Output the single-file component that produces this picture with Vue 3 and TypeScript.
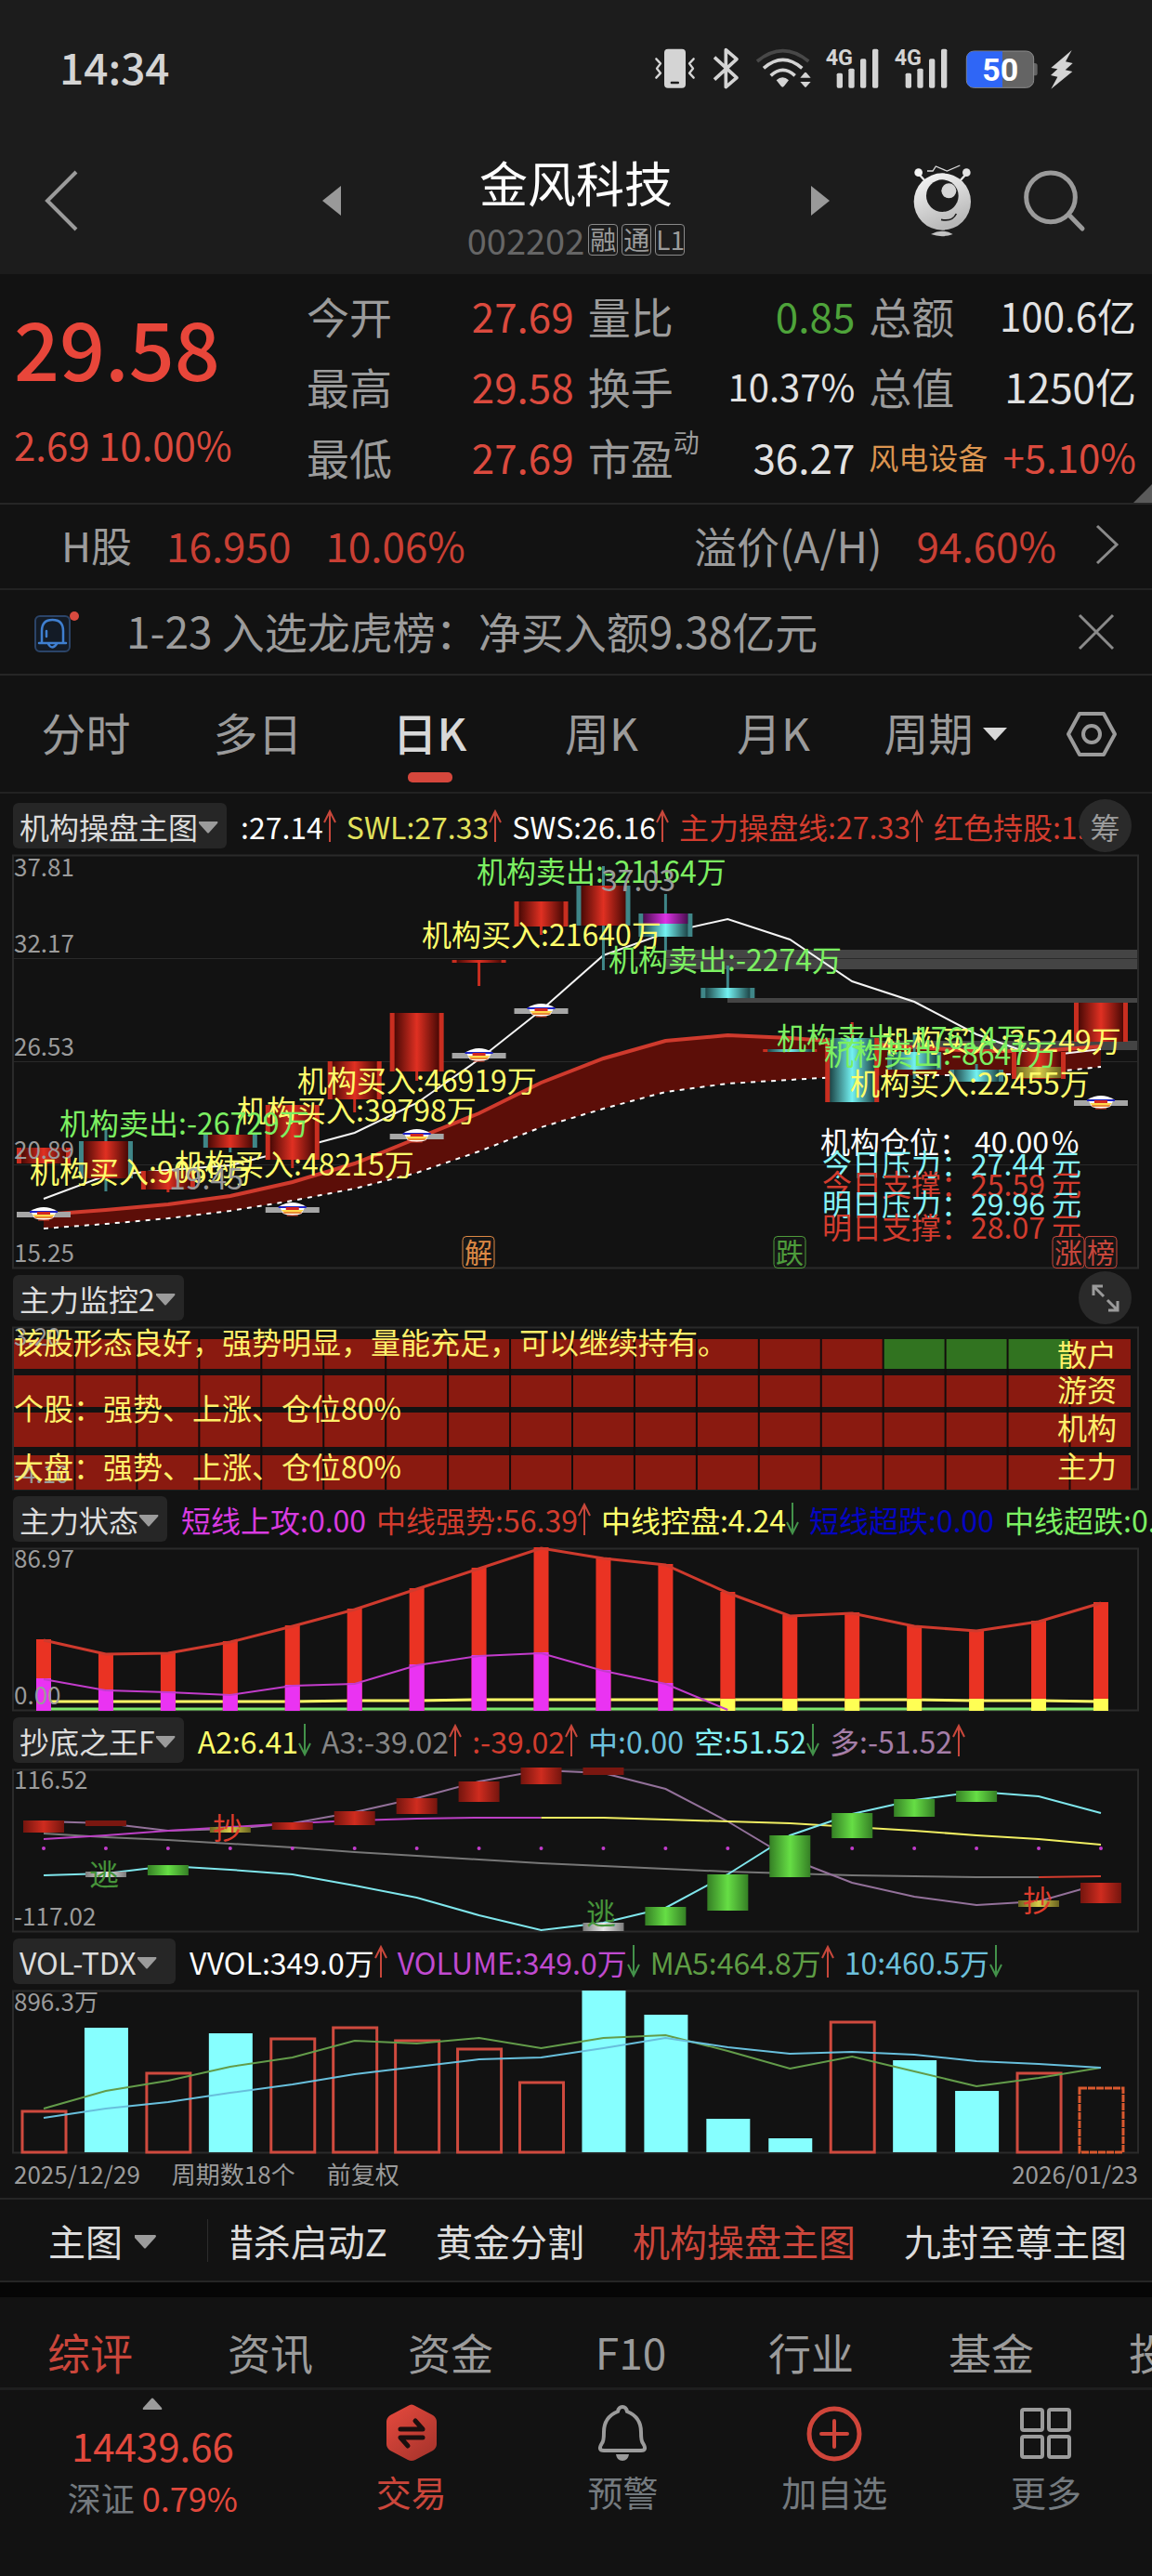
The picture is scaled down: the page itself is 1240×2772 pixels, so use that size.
<script setup lang="ts">
interface Stat {
  label: string
  sup?: string
  value: string
  tone: string
  size?: string
  small?: boolean
}
interface Reading {
  text: string
  color: string
  dir?: 'up' | 'down'
}
interface Candle {
  top: number
  bottom: number
  fill: string
  edge: string
  high?: number
  low?: number
}
interface Block {
  i: number
  top: number
  bottom: number
  fill: string
}
interface Note {
  x: number
  y: number
  text: string
  kind: string
}

const FIRST = 47
const STEP = 66.94
const cx = (i: number): number => FIRST + STEP * i
const path = (ys: number[], start = 0): string =>
  ys.map((y, k) => `${cx(k + start).toFixed(1)},${y}`).join(' ')

const stats: Stat[] = [
  { label: '今开', value: '27.69', tone: 'red' },
  { label: '量比', value: '0.85', tone: 'green' },
  { label: '总额', value: '100.6亿', tone: 'white', size: 'mid' },
  { label: '最高', value: '29.58', tone: 'red' },
  { label: '换手', value: '10.37%', tone: 'white', size: 'low' },
  { label: '总值', value: '1250亿', tone: 'white' },
  { label: '最低', value: '27.69', tone: 'red' },
  { label: '市盈', sup: '动', value: '36.27', tone: 'white' },
  { label: '风电设备', value: '+5.10%', tone: 'red', size: 'mid', small: true },
]

const periods = ['分时', '多日', '日K', '周K', '月K']
const infoTabs = ['综评', '资讯', '资金', 'F10', '行业', '基金', '投资']
const templates = ['猎杀启动Z', '黄金分割', '机构操盘主图', '九封至尊主图']

const RED = '#d23c2e'
const YELLOW = '#ffff6b'
const CYAN = '#85f3f7'
const MAGENTA = '#d83be0'

const mainReadings: Reading[] = [
  { text: ':27.14', color: '#ffffff', dir: 'up' },
  { text: 'SWL:27.33', color: '#e2e25c', dir: 'up' },
  { text: 'SWS:26.16', color: '#ffffff', dir: 'up' },
  { text: '主力操盘线:27.33', color: RED, dir: 'up' },
  { text: '红色持股:1.00', color: RED },
]
const stateReadings: Reading[] = [
  { text: '短线上攻:0.00', color: MAGENTA },
  { text: '中线强势:56.39', color: RED, dir: 'up' },
  { text: '中线控盘:4.24', color: YELLOW, dir: 'down' },
  { text: '短线超跌:0.00', color: '#0505c0' },
  { text: '中线超跌:0.00', color: '#7cf062' },
]
const bottomReadings: Reading[] = [
  { text: 'A2:6.41', color: YELLOW, dir: 'down' },
  { text: 'A3:-39.02', color: '#868686', dir: 'up' },
  { text: ':-39.02', color: RED, dir: 'up' },
  { text: '中:0.00', color: '#6cc0dc' },
  { text: '空:51.52', color: CYAN, dir: 'down' },
  { text: '多:-51.52', color: '#a57ea8', dir: 'up' },
]
const volumeReadings: Reading[] = [
  { text: 'VVOL:349.0万', color: '#ffffff', dir: 'up' },
  { text: 'VOLUME:349.0万', color: '#c04ad0', dir: 'down' },
  { text: 'MA5:464.8万', color: '#5f9e45', dir: 'up' },
  { text: '10:460.5万', color: '#6cc0dc', dir: 'down' },
]

const R = 'url(#g-red)'
const C = 'url(#g-cyan)'
const EDGE_RED = '#c92e20'
const EDGE_TEAL = '#3f8688'
const candles: Candle[] = [
  { top: 335, bottom: 352, fill: R, edge: EDGE_RED },
  { top: 328, bottom: 368, fill: R, edge: EDGE_TEAL, high: 315, low: 382 },
  { top: 360, bottom: 380, fill: R, edge: EDGE_RED, low: 383 },
  { top: 321, bottom: 335, fill: R, edge: EDGE_TEAL, low: 340 },
  { top: 289, bottom: 348, fill: R, edge: EDGE_RED, low: 357 },
  { top: 242, bottom: 283, fill: R, edge: EDGE_RED, low: 297 },
  { top: 190, bottom: 253, fill: R, edge: EDGE_RED, low: 263 },
  { top: 133, bottom: 136, fill: R, edge: EDGE_RED, low: 161 },
  { top: 70, bottom: 97, fill: R, edge: EDGE_RED, low: 106 },
  { top: 53, bottom: 96, fill: R, edge: EDGE_TEAL, high: 32, low: 144 },
  { top: 83, bottom: 108, fill: C, edge: EDGE_TEAL, high: 62, low: 123 },
  { top: 163, bottom: 174, fill: C, edge: EDGE_TEAL, high: 139 },
  { top: 229, bottom: 232, fill: C, edge: EDGE_RED },
  { top: 217, bottom: 286, fill: C, edge: EDGE_RED, high: 200 },
  { top: 232, bottom: 251, fill: C, edge: EDGE_TEAL, high: 213, low: 261 },
  { top: 251, bottom: 264, fill: C, edge: EDGE_TEAL, high: 245 },
  { top: 232, bottom: 261, fill: R, edge: EDGE_RED },
  { top: 179, bottom: 221, fill: R, edge: EDGE_RED },
]
const avgLine = [390, 365, 359, 354, 337, 319, 287, 240, 187, 128, 104, 89, 111, 156, 178, 213, 237, 229]
const bandTop = [407, 402, 396, 387, 372, 352, 325, 298, 265, 239, 220, 214, 217, 222, 227, 231, 231, 226]
const bandLow = [422, 417, 411, 403, 392, 379, 362, 339, 313, 293, 275, 266, 262, 258, 257, 257, 255, 248]
const bandShape = `${path(bandTop)} ${path(bandLow).split(' ').reverse().join(' ')}`
const ingots = [
  { i: 0, y: 407 },
  { i: 4, y: 402 },
  { i: 6, y: 323 },
  { i: 7, y: 236 },
  { i: 8, y: 188 },
  { i: 17, y: 287 },
]
const notes: Note[] = [
  { x: 513, y: 50, text: '机构卖出:-21164万', kind: 'sell' },
  { x: 454, y: 118, text: '机构买入:21640万', kind: 'buy' },
  { x: 655, y: 145, text: '机构卖出:-2274万', kind: 'sell' },
  { x: 320, y: 275, text: '机构买入:46919万', kind: 'buy' },
  { x: 255, y: 307, text: '机构买入:39798万', kind: 'buy' },
  { x: 64, y: 321, text: '机构卖出:-26729万', kind: 'sell' },
  { x: 32, y: 373, text: '机构买入:9069万', kind: 'buy' },
  { x: 188, y: 365, text: '机构买入:48215万', kind: 'buy' },
  { x: 949, y: 232, text: '机构买入:35249万', kind: 'buy' },
  { x: 836, y: 229, text: '机构卖出:-17614万', kind: 'sell' },
  { x: 887, y: 246, text: '机构卖出:-8647万', kind: 'sell' },
  { x: 915, y: 278, text: '机构买入:22455万', kind: 'buy' },
]
const levels = [
  { y: 341, x: 883, label: '机构仓位：', vx: 1049, value: '40.00', unit: '%', color: '#ffffff' },
  { y: 365, x: 885, label: '今日压力：', vx: 1045, value: '27.44', unit: '元', color: CYAN },
  { y: 387, x: 885, label: '今日支撑：', vx: 1045, value: '25.59', unit: '元', color: RED },
  { y: 408, x: 885, label: '明日压力：', vx: 1045, value: '29.96', unit: '元', color: CYAN },
  { y: 433, x: 885, label: '明日支撑：', vx: 1045, value: '28.07', unit: '元', color: RED },
]
const marks = [
  { x: 498, text: '解', color: '#dd8844' },
  { x: 833, text: '跌', color: '#4d9c3b' },
  { x: 1133, text: '涨', color: '#c8463b' },
  { x: 1168, text: '榜', color: '#c8463b' },
]
const mainScale = [
  { y: 43, text: '37.81' },
  { y: 125, text: '32.17' },
  { y: 236, text: '26.53' },
  { y: 347, text: '20.89' },
  { y: 458, text: '15.25' },
]

const strips = [
  { top: 81, bottom: 113 },
  { top: 120, bottom: 154 },
  { top: 160, bottom: 197 },
  { top: 206, bottom: 243 },
]
const seams = Array.from({ length: 17 }, (_, k) => cx(k) + STEP / 2)

const forceTop = [164, 179, 178, 166, 149, 131, 109, 87, 65, 76, 83, 113, 138, 135, 149, 154, 144, 124]
const shortTop = [206, 218, 220, 223, 213, 211, 191, 181, 178, 197, 211]
const holdLine = [231, 231, 231, 231, 231, 230, 230, 229, 229, 229, 229, 229, 229, 229, 229, 230, 230, 231]

const blocks: Block[] = [
  { i: 0, top: 359, bottom: 372, fill: 'url(#g-brick)' },
  { i: 1, top: 359, bottom: 365, fill: '#7a1710' },
  { i: 1, top: 414, bottom: 420, fill: 'url(#g-silver)' },
  { i: 2, top: 407, bottom: 418, fill: 'url(#g-green)' },
  { i: 3, top: 366, bottom: 372, fill: 'url(#g-gold)' },
  { i: 4, top: 361, bottom: 369, fill: 'url(#g-brick)' },
  { i: 5, top: 349, bottom: 364, fill: 'url(#g-brick)' },
  { i: 6, top: 335, bottom: 352, fill: 'url(#g-brick)' },
  { i: 7, top: 317, bottom: 339, fill: 'url(#g-brick)' },
  { i: 8, top: 302, bottom: 320, fill: 'url(#g-brick)' },
  { i: 9, top: 302, bottom: 310, fill: '#7a1710' },
  { i: 9, top: 469, bottom: 478, fill: 'url(#g-silver)' },
  { i: 10, top: 452, bottom: 472, fill: 'url(#g-green)' },
  { i: 11, top: 417, bottom: 456, fill: 'url(#g-green)' },
  { i: 12, top: 375, bottom: 420, fill: 'url(#g-green)' },
  { i: 13, top: 351, bottom: 378, fill: 'url(#g-green)' },
  { i: 14, top: 336, bottom: 355, fill: 'url(#g-green)' },
  { i: 15, top: 327, bottom: 339, fill: 'url(#g-green)' },
  { i: 16, top: 445, bottom: 452, fill: 'url(#g-gold)' },
  { i: 17, top: 426, bottom: 448, fill: 'url(#g-brick)' },
]
const longLine = [360, 362, 370, 368, 362, 350, 335, 317, 305, 308, 325, 360, 400, 426, 441, 450, 446, 427]
const emptyLine = [418, 416, 408, 412, 417, 429, 442, 461, 477, 469, 453, 417, 375, 352, 337, 328, 333, 351]
const slowGray = [373, 377, 380, 384, 388, 393, 397, 401, 405, 408, 411, 414, 416, 418, 419, 420, 420]
const a2Rise = [379, 375, 370, 366, 362, 359, 357, 356, 356]
const a2Fall = [356, 356, 358, 360, 362, 366, 370, 375, 379, 385]

const volumes = [192, 102, 151, 108, 114, 102, 116, 125, 161, 62, 88, 200, 221, 96, 137, 170, 151, 167]
const falling = new Set([1, 3, 9, 10, 11, 12, 14, 15])
const ma5 = [189, 170, 159, 144, 134, 116, 119, 113, 124, 113, 110, 127, 146, 133, 149, 165, 156, 145]
const ma10 = [199, 189, 182, 172, 163, 152, 144, 136, 134, 124, 113, 123, 130, 128, 131, 138, 141, 145]

const panes = [
  { key: 'main', name: '机构操盘主图', readings: mainReadings, badge: 'chips', box: '0 18 1240 449' },
  { key: 'watch', name: '主力监控2', readings: [] as Reading[], badge: 'expand', box: '0 66 1240 179' },
  { key: 'state', name: '主力状态', readings: stateReadings, badge: '', box: '0 64 1240 179' },
  { key: 'bottom', name: '抄底之王F', readings: bottomReadings, badge: '', box: '0 302 1240 179' },
  { key: 'volume', name: 'VOL-TDX', readings: volumeReadings, badge: '', box: '0 60 1240 179' },
]
</script>

<template>
  <div class="app">
    <header class="top">
      <div class="status">
        <span class="clock">14:34</span>
        <svg class="status-icons" viewBox="30 -20 1380 240" aria-hidden="true">
          <g fill="#d4d4d4">
            <path fill-rule="evenodd" d="M87 39h45q12 0 12 12v102q0 12-12 12H87q-12 0-12-12V51q0-12 12-12zM98 144q-3 0-3 4t3 4h22q3 0 3-4t-3-4z" />
            <g fill="none" stroke="#d4d4d4" stroke-width="7" stroke-linejoin="round" stroke-linecap="round">
              <path d="M49 71l14 15-12 16 12 15-14 15M170 71l-14 15 12 16-12 15 14 15" />
            </g>
            <path d="M237 66l72 66-35 30V42l35 30-72 66" fill="none" stroke="#d4d4d4" stroke-width="11" stroke-linejoin="round" />
            <g fill="none" stroke-width="11">
              <path d="M375 79q83-68 166 0" stroke="#484848" />
              <path d="M396 101q62-54 124 0M419 125q39-36 78 0" stroke="#d4d4d4" />
            </g>
            <path d="M437 140q20-18 40 0l-14 18q-6 8-12 0zM514 132l14-16q3-4 6 0l14 16zM514 145h34l-14 16q-3 4-6 0z" />
            <g v-for="dx in [0, 222]" :key="dx" :transform="`translate(${dx} 0)`">
              <rect x="632" y="117" width="19" height="48" rx="5" />
              <rect x="670" y="102" width="19" height="63" rx="5" />
              <rect x="708" y="71" width="19" height="94" rx="5" />
              <rect x="747" y="39" width="19" height="126" rx="5" />
              <text x="596" y="91" font-size="70" font-weight="700">4G</text>
            </g>
            <rect x="1262" y="85" width="18" height="40" rx="8" fill="#646464" />
            <rect x="1051" y="46" width="217" height="118" rx="24" fill="#646464" stroke="#8c8c8c" stroke-width="3" />
            <path d="M1167 47v116h-92q-23 0-23-23V70q0-23 23-23z" fill="#2f66f6" />
            <text x="1160" y="141" font-size="102" font-weight="700" fill="#fff" text-anchor="middle">50</text>
            <path d="M1391 43l-67 57 21 4-22 20 22 5-21 39 69-56-23-5 24-22-23-5z" />
          </g>
        </svg>
      </div>

      <div class="title-row">
        <button class="icon-btn back" type="button" aria-label="返回">
          <svg viewBox="0 0 40 68" width="40" height="68"><path d="M36 3L5 34l31 31" fill="none" stroke="#9b9b9b" stroke-width="4" /></svg>
        </button>
        <button class="icon-btn prev" type="button" aria-label="上一只">
          <svg viewBox="0 0 20 32" width="20" height="32"><path d="M20 0v32L0 16z" fill="#999" /></svg>
        </button>
        <div class="name">
          <h1>金风科技</h1>
          <p>002202<i>融</i><i>通</i><i>L1</i></p>
        </div>
        <button class="icon-btn next" type="button" aria-label="下一只">
          <svg viewBox="0 0 20 32" width="20" height="32"><path d="M0 0v32l20-16z" fill="#999" /></svg>
        </button>
        <div class="actions">
          <button class="icon-btn" type="button" aria-label="智能助手">
            <svg viewBox="870 410 201 240" width="67" height="80">
              <defs>
                <linearGradient id="g-mascot" x1="0" y1="0" x2=".4" y2="1">
                  <stop offset="0" stop-color="#fafafa" />
                  <stop offset="1" stop-color="#b8b8b8" />
                </linearGradient>
              </defs>
              <path d="M896 446l22 24M1045 446l-22 24" stroke="#e6e6e6" stroke-width="7" />
              <circle cx="893" cy="439" r="13" fill="#f4f4f4" />
              <circle cx="1048" cy="439" r="13" fill="#e2e2e2" />
              <path d="M921 434h18l10-15 36 15 42-18" fill="none" stroke="#ddd" stroke-width="4" />
              <circle cx="970" cy="533" r="92" fill="url(#g-mascot)" />
              <circle cx="970" cy="514" r="52" fill="#1c1c1c" />
              <circle cx="991" cy="498" r="24" fill="#d6d6d6" />
              <path d="M966 591q36 8 49-19" fill="none" stroke="#1c1c1c" stroke-width="5" />
              <path d="M933 638q37-20 71 0-35 13-71 0z" fill="#c2c2c2" />
            </svg>
          </button>
          <button class="icon-btn" type="button" aria-label="搜索">
            <svg viewBox="1230 425 210 210" width="70" height="70">
              <circle cx="1323" cy="519" r="79" fill="none" stroke="#9b9b9b" stroke-width="15" />
              <path d="M1382 576l43 44" stroke="#9b9b9b" stroke-width="15" stroke-linecap="round" />
            </svg>
          </button>
        </div>
      </div>
    </header>

    <section class="quote">
      <div class="price">
        <strong>29.58</strong>
        <span>2.69 10.00%</span>
      </div>
      <div class="stats">
        <div v-for="s in stats" :key="s.label" class="stat">
          <span :class="['stat-label', { sector: s.small }]">{{ s.label }}<sup v-if="s.sup">{{ s.sup }}</sup></span>
          <span :class="['stat-value', s.tone, s.size]">{{ s.value }}</span>
        </div>
      </div>
      <svg class="corner" viewBox="0 0 20 20" width="20" height="20" aria-hidden="true"><path d="M20 0v20H0z" fill="#5a5a5a" /></svg>
    </section>

    <a class="h-share" href="#h-share">
      <span>H股</span><b>16.950</b><b>10.06%</b>
      <span class="premium">溢价(A/H)</span><b>94.60%</b>
      <svg viewBox="0 0 26 44" width="26" height="44" aria-hidden="true"><path d="M2 2l21 20L2 42" fill="none" stroke="#8a8a8a" stroke-width="3" /></svg>
    </a>

    <section class="notice">
      <svg viewBox="0 0 52 46" width="52" height="46" aria-hidden="true">
        <rect x="2" y="6" width="37" height="38" rx="5" fill="#131b26" stroke="#2b4468" stroke-width="2" />
        <path d="M6 35h29M9 35V22q0-12 11.500-12T32 22v13M16 36q4 7 9 0M14 22v6" fill="none" stroke="#3f7fd0" stroke-width="2.500" stroke-linecap="round" />
        <circle cx="44" cy="6" r="5" fill="#d84a3f" />
      </svg>
      <p>1-23 入选龙虎榜：净买入额9.38亿元</p>
      <button class="icon-btn" type="button" aria-label="关闭">
        <svg viewBox="0 0 40 40" width="40" height="40"><path d="M2 2l36 36M38 2L2 38" stroke="#8a8a8a" stroke-width="3" /></svg>
      </button>
    </section>

    <nav class="periods">
      <button v-for="p in periods" :key="p" type="button" :class="{ on: p === '日K' }">{{ p }}</button>
      <button type="button" class="more">
        周期<svg viewBox="0 0 26 14" width="26" height="14" aria-hidden="true"><path d="M0 0h26L13 14z" fill="#d8d8d8" /></svg>
      </button>
      <button type="button" class="settings" aria-label="设置">
        <svg viewBox="0 0 56 50" width="56" height="50"><path d="M15 3h26l12 22-12 22H15L3 25z" fill="none" stroke="#9b9b9b" stroke-width="4" stroke-linejoin="round" /><circle cx="28" cy="25" r="9" fill="none" stroke="#9b9b9b" stroke-width="4" /></svg>
      </button>
    </nav>

    <main class="charts">
      <section v-for="pane in panes" :key="pane.key" class="pane">
        <div class="pane-head">
          <button type="button" :class="['picker', pane.key]">
            {{ pane.name }}<svg viewBox="0 0 22 13" width="22" height="13" aria-hidden="true"><path d="M1 0h20q1 1 0 2L12 12q-1 1-2 0L1 2z" fill="#9b9b9b" /></svg>
          </button>
          <div class="readings">
            <span v-for="r in pane.readings" :key="r.text" :style="{ color: r.color }">{{ r.text }}<svg v-if="r.dir" viewBox="0 0 14 36" width="14" height="36" aria-hidden="true">
              <path v-if="r.dir === 'up'" d="M7 35V2M1 14L7 2l6 12" fill="none" stroke="#c8473b" stroke-width="2" />
              <path v-else d="M7 0v33M1 21l6 12 6-12" fill="none" stroke="#43924a" stroke-width="2" />
            </svg></span>
          </div>
          <button v-if="pane.badge === 'chips'" type="button" class="round">筹</button>
          <button v-if="pane.badge === 'expand'" type="button" class="round" aria-label="放大">
            <svg viewBox="0 0 30 30" width="30" height="30"><path d="M2 12V2h10M2 2l11 11M28 18v10H18M28 28L17 17" fill="none" stroke="#9b9b9b" stroke-width="3" /></svg>
          </button>
        </div>

        <svg class="plot" :viewBox="pane.box" role="img" :aria-label="pane.name">
          <template v-if="pane.key === 'main'">
            <defs>
              <linearGradient id="g-red">
                <stop offset="0" stop-color="#4a0905" />
                <stop offset=".5" stop-color="#e03022" />
                <stop offset="1" stop-color="#4a0905" />
              </linearGradient>
              <linearGradient id="g-cyan">
                <stop offset="0" stop-color="#1d4547" />
                <stop offset=".5" stop-color="#73f2f2" />
                <stop offset="1" stop-color="#1d4547" />
              </linearGradient>
              <linearGradient id="g-violet">
                <stop offset="0" stop-color="#4a0d4e" />
                <stop offset=".5" stop-color="#dc32e6" />
                <stop offset="1" stop-color="#4a0d4e" />
              </linearGradient>
              <linearGradient id="g-brick">
                <stop offset="0" stop-color="#74150e" />
                <stop offset=".5" stop-color="#cf2c1f" />
                <stop offset="1" stop-color="#74150e" />
              </linearGradient>
              <linearGradient id="g-green">
                <stop offset="0" stop-color="#357f25" />
                <stop offset=".5" stop-color="#66de45" />
                <stop offset="1" stop-color="#357f25" />
              </linearGradient>
              <linearGradient id="g-gold">
                <stop offset="0" stop-color="#6a6420" />
                <stop offset=".5" stop-color="#d8cc4a" />
                <stop offset="1" stop-color="#6a6420" />
              </linearGradient>
              <linearGradient id="g-silver">
                <stop offset="0" stop-color="#7c7c7c" />
                <stop offset=".5" stop-color="#e8e8e8" />
                <stop offset="1" stop-color="#7c7c7c" />
              </linearGradient>
            </defs>
            <g fill="#444">
              <rect x="716" y="122" width="509" height="21" />
              <rect x="783" y="174" width="442" height="5" />
              <rect x="917" y="220" width="308" height="10" />
            </g>
            <path d="M14 131.500H1225M14 242.500H1225M14 353.500H1225" class="grid" />
            <rect x="14" y="20.500" width="1211" height="444" class="frame" />
            <polygon :points="bandShape" fill="#5c0e08" />
            <polyline :points="path(bandTop)" fill="none" stroke="#cf3a2d" stroke-width="4" />
            <polyline :points="path(bandLow)" fill="none" stroke="#fff" stroke-width="2" stroke-dasharray="5 6" />
            <polyline :points="path(avgLine)" fill="none" stroke="#f4f4f4" stroke-width="2" />
            <g v-for="(c, i) in candles" :key="i">
              <path v-if="c.high" :d="`M${cx(i)} ${c.high}V${c.top}`" :stroke="c.edge" stroke-width="3" />
              <path v-if="c.low" :d="`M${cx(i)} ${c.bottom}V${c.low}`" :stroke="c.edge" stroke-width="3" />
              <rect :x="cx(i) - 29" :y="c.top" width="58" :height="c.bottom - c.top" :fill="c.edge" />
              <rect :x="cx(i) - 24" :y="c.top" width="48" :height="c.bottom - c.top" :fill="c.fill" />
            </g>
            <rect :x="cx(10) - 24" y="83" width="48" height="11" fill="url(#g-violet)" />
            <rect :x="cx(16) - 24" y="248" width="48" height="12" fill="url(#g-gold)" />
            <g v-for="m in ingots" :key="m.i" :transform="`translate(${cx(m.i)} ${m.y})`">
              <rect x="-29" y="-3" width="58" height="6" fill="#a6a6a6" />
              <path d="M-14-4Q0-12 14-4L10 4Q0 8-10 4z" fill="#fff" />
              <path d="M-15-3H15" stroke="#1f24c8" stroke-width="2" />
              <rect x="-7" y="-3" width="14" height="4" fill="#d32620" />
              <path d="M-12 0H12L8 4H-8z" fill="#ffd84a" />
              <path d="M-10 3H10M-6 6H6" stroke="#d33a20" stroke-width="1" />
            </g>
            <g class="scale"><text v-for="s in mainScale" :key="s.text" x="15" :y="s.y">{{ s.text }}</text></g>
            <g class="t32">
              <text v-for="n in notes" :key="n.text" :x="n.x" :y="n.y" :class="n.kind">{{ n.text }}</text>
              <text x="182" y="380" fill="#9a9a9a">19.45</text>
              <text x="647" y="59" fill="#9a9a9a">37.03</text>
              <g v-for="l in levels" :key="l.label" :fill="l.color">
                <text :x="l.x" :y="l.y">{{ l.label }}</text>
                <text :x="l.vx" :y="l.y">{{ l.value }}</text>
                <text x="1132" :y="l.y">{{ l.unit }}</text>
              </g>
            </g>
            <g v-for="m in marks" :key="m.text">
              <rect :x="m.x" y="430.500" width="34" height="34" rx="4" fill="#161616" :stroke="m.color" stroke-width="1" />
              <text :x="m.x + 17" y="459" font-size="30" text-anchor="middle" :fill="m.color">{{ m.text }}</text>
            </g>
          </template>

          <template v-else-if="pane.key === 'watch'">
            <rect x="14" y="68.500" width="1211" height="174" class="frame" />
            <rect v-for="s in strips" :key="s.top" x="15" :y="s.top" width="1202" :height="s.bottom - s.top" fill="#8a1a10" />
            <rect :x="seams[13]" y="81" :width="STEP * 3" height="32" fill="#317320" />
            <path v-for="x in seams" :key="x" :d="`M${x} 81V243`" stroke="#120c0c" stroke-width="2" />
            <g class="scale"><text x="15" y="88">3.20</text><text x="15" y="236">-4.10</text></g>
            <g class="t32" fill="#fff06a">
              <text x="15" y="97">该股形态良好，强势明显，量能充足，可以继续持有。</text>
              <text x="15" y="168">个股：强势、上涨、仓位80%</text>
              <text x="15" y="231">大盘：强势、上涨、仓位80%</text>
              <text x="1138" y="110">散户</text>
              <text x="1138" y="148">游资</text>
              <text x="1138" y="189">机构</text>
              <text x="1138" y="230">主力</text>
            </g>
          </template>

          <template v-else-if="pane.key === 'state'">
            <rect x="14" y="66.500" width="1211" height="174" class="frame" />
            <path :d="`M47 239H${cx(17)}`" stroke="#7fe66c" stroke-width="3" />
            <polyline :points="path(holdLine)" fill="none" stroke="#ffff66" stroke-width="3" />
            <rect v-for="(y, i) in forceTop" :key="i" :x="cx(i) - 8" :y="y" width="16" :height="241 - y" fill="#ea3323" />
            <rect v-for="(y, i) in shortTop" :key="'s' + i" :x="cx(i) - 8" :y="y" width="16" :height="241 - y" fill="#ea33f2" />
            <rect v-for="i in [11, 12, 13, 14, 15, 16, 17]" :key="'y' + i" :x="cx(i) - 8" y="228" width="16" height="13" fill="#ffff54" />
            <polyline :points="path(forceTop.map((y) => y + 1))" fill="none" stroke="#cf3a2d" stroke-width="3" />
            <polyline :points="path([...shortTop.map((y) => y + 1), 240])" fill="none" stroke="#c23ccb" stroke-width="2" />
            <g class="scale"><text x="15" y="87">86.97</text><text x="15" y="234">0.00</text></g>
          </template>

          <template v-else-if="pane.key === 'bottom'">
            <rect x="14" y="304.500" width="1211" height="174" class="frame" />
            <g fill="none" stroke-width="2">
              <polyline :points="path(slowGray)" stroke="#777" />
              <path :d="`M${cx(16)} 420L${cx(17)} 419`" stroke="#d23c2e" />
              <polyline :points="path(longLine)" stroke="#93719a" />
              <polyline :points="path(a2Rise)" stroke="#bb40c4" />
              <polyline :points="path(a2Fall, 8)" stroke="#f0ee62" />
              <polyline :points="path(emptyLine)" stroke="#7fe6ec" />
            </g>
            <circle v-for="i in 18" :key="i" :cx="cx(i - 1)" cy="389" r="2" fill="#c23ccb" />
            <rect v-for="(b, k) in blocks" :key="'b' + k" :x="cx(b.i) - 22" :y="b.top" width="44" :height="b.bottom - b.top" :fill="b.fill" />
            <g class="t32">
              <text x="229" y="379" fill="#dd3c2c">抄</text>
              <text x="1101" y="457" fill="#dd3c2c">抄</text>
              <text x="96" y="429" fill="#46943a">逃</text>
              <text x="631" y="471" fill="#46943a">逃</text>
            </g>
            <g class="scale"><text x="15" y="325">116.52</text><text x="15" y="472">-117.02</text></g>
          </template>

          <template v-else>
            <rect x="14" y="62.500" width="1211" height="174" class="frame" />
            <template v-for="(y, i) in volumes" :key="i">
              <rect v-if="falling.has(i)" :x="cx(i) - 23" :y="y" width="47" :height="236 - y" fill="#86ffff" />
              <rect v-else :x="cx(i) - 23" :y="y" width="47" :height="236 - y" fill="none" :stroke="i === 17 ? '#d9592f' : '#cf4a3e'" stroke-width="3" :stroke-dasharray="i === 17 ? '8 1' : undefined" />
            </template>
            <g fill="none" stroke-width="2">
              <polyline :points="path(ma5)" stroke="#639c4a" />
              <polyline :points="path(ma10)" stroke="#68bfdc" />
            </g>
            <g class="scale"><text x="15" y="84">896.3万</text></g>
          </template>
        </svg>
      </section>
      <footer class="range">
        <span>2025/12/29</span><span>周期数18个</span><span>前复权</span><span class="end">2026/01/23</span>
      </footer>
    </main>

    <nav class="templates">
      <button type="button" class="slot">
        主图<svg viewBox="0 0 24 15" width="24" height="15" aria-hidden="true"><path d="M1 0h22q2 1 0 3L13 14q-1 1-2 0L1 3z" fill="#9b9b9b" /></svg>
      </button>
      <div class="strip">
        <button v-for="t in templates" :key="t" type="button" :class="{ on: t === '机构操盘主图' }">{{ t }}</button>
      </div>
    </nav>

    <nav class="info-tabs">
      <a v-for="(t, i) in infoTabs" :key="t" :href="'#tab-' + i" :class="{ on: i === 0 }">{{ t }}</a>
    </nav>

    <nav class="dock">
      <a class="index" href="#index">
        <svg viewBox="0 0 22 13" width="22" height="13" aria-hidden="true"><path d="M10 1q1-1 2 0l9 10q1 2-1 2H2q-2 0-1-2z" fill="#9b9b9b" /></svg>
        <strong>14439.66</strong>
        <span>深证 <b>0.79%</b></span>
      </a>
      <a class="hot" href="#trade">
        <svg viewBox="0 0 62 62" width="62" height="62" aria-hidden="true">
          <defs>
            <linearGradient id="g-trade" x1="0" y1="0" x2=".8" y2="1">
              <stop offset="0" stop-color="#e84a3e" />
              <stop offset="1" stop-color="#a8342c" />
            </linearGradient>
          </defs>
          <path d="M27 2q4-3 8 0l19 10q4 3 4 7v24q0 4-4 7L35 60q-4 2-8 0L8 50q-4-3-4-7V19q0-4 4-7z" fill="url(#g-trade)" />
          <path d="M19 27h24l-8-9M43 36H19l8 9" fill="none" stroke="#1b0f0e" stroke-width="5" stroke-linecap="round" stroke-linejoin="round" />
        </svg>
        <span>交易</span>
      </a>
      <a href="#alert">
        <svg viewBox="0 0 62 62" width="62" height="62" aria-hidden="true">
          <path d="M31 3q4 0 5 5 15 6 15 22 0 10 2 12 5 8-2 8H11q-7 0-2-8 2-2 2-12 0-16 15-22 1-5 5-5z" fill="none" stroke="#9b9b9b" stroke-width="4" stroke-linejoin="round" />
          <path d="M24 54h14q-1 7-7 7t-7-7z" fill="#9b9b9b" />
        </svg>
        <span>预警</span>
      </a>
      <a href="#watchlist">
        <svg viewBox="0 0 62 62" width="62" height="62" aria-hidden="true">
          <circle cx="31" cy="32" r="27" fill="none" stroke="#cf453a" stroke-width="5" />
          <path d="M31 18v28M17 32h28" stroke="#cf453a" stroke-width="4" stroke-linecap="round" />
        </svg>
        <span>加自选</span>
      </a>
      <a href="#more">
        <svg viewBox="0 0 62 62" width="62" height="62" aria-hidden="true">
          <g fill="none" stroke="#9b9b9b" stroke-width="4">
            <rect x="5" y="6" width="22" height="22" rx="2" />
            <rect x="34" y="6" width="22" height="22" rx="2" />
            <rect x="5" y="35" width="22" height="22" rx="2" />
            <rect x="34" y="35" width="22" height="22" rx="2" />
          </g>
        </svg>
        <span>更多</span>
      </a>
    </nav>
  </div>
</template>

<style>
html,
body {
  background: #121212;
}
</style>

<style scoped>
.app {
  font-family: 'Noto Sans CJK SC', 'Noto Sans', sans-serif;
  font-weight: 400;
  color: #9b9b9b;
  background: #121212;
  overflow: hidden;
}
.app * {
  box-sizing: border-box;
}
button {
  padding: 0;
  border: 0;
  background: none;
  color: inherit;
  font: inherit;
  white-space: nowrap;
}
a {
  color: inherit;
  text-decoration: none;
}
b {
  font-weight: 400;
}
p,
h1 {
  margin: 0;
}
svg {
  display: block;
  flex: none;
}

.top {
  background: #1c1c1c;
}
.status {
  display: flex;
  align-items: center;
  justify-content: space-between;
  height: 146px;
  padding: 0 80px 0 64px;
}
.clock {
  padding-bottom: 4px;
  font-size: 46px;
  font-weight: 500;
  line-height: 60px;
  color: #d4d4d4;
}
.status-icons {
  width: 460px;
  height: 80px;
  font-family: Roboto, sans-serif;
}
.title-row {
  display: grid;
  grid-template-columns: 1fr auto 1fr;
  grid-template-areas: 'left name right';
  align-items: center;
  height: 149px;
  padding: 0 46px 9px;
}
.icon-btn {
  display: flex;
}
.back {
  grid-area: left;
  justify-self: start;
}
.prev {
  grid-area: left;
  justify-self: end;
}
.next {
  grid-area: right;
  justify-self: start;
}
.name {
  grid-area: name;
  width: 506px;
  padding-top: 16px;
  text-align: center;
}
.actions {
  grid-area: right;
  justify-self: end;
  display: flex;
  align-items: center;
  gap: 52px;
  padding-right: 24px;
}
h1 {
  font-size: 52px;
  font-weight: 400;
  line-height: 68px;
  color: #fff;
}
.name p {
  display: flex;
  justify-content: center;
  align-items: center;
  gap: 4px;
  font-size: 38px;
  line-height: 56px;
  color: #666;
}
.name i {
  width: 32px;
  height: 34px;
  border: 1px solid #8a8a8a;
  border-radius: 4px;
  font-size: 28px;
  font-style: normal;
  line-height: 30px;
  color: #9b9b9b;
}

.quote {
  position: relative;
  display: flex;
  height: 248px;
  padding: 6px 17px 0 15px;
  border-bottom: 2px solid #262626;
}
.price {
  flex: none;
  width: 315px;
  color: #e8463a;
}
.price strong,
.price span {
  display: block;
  white-space: nowrap;
}
.price strong {
  margin-top: 22px;
  font-size: 86px;
  font-weight: 500;
  line-height: 100px;
}
.price span {
  margin-top: 30px;
  font-size: 42px;
  line-height: 50px;
  color: #db4a3e;
}
.stats {
  flex: 1;
  display: grid;
  grid-template-columns: repeat(3, 1fr);
  grid-auto-rows: 76px;
  column-gap: 15px;
}
.stat {
  display: flex;
  align-items: center;
  justify-content: space-between;
  font-size: 46px;
  line-height: 64px;
  white-space: nowrap;
}
.stat-label {
  position: relative;
}
.stat-label sup {
  position: absolute;
  left: 100%;
  top: -4px;
  font-size: 28px;
  line-height: 40px;
}
.stat-label.sector {
  font-size: 32px;
  color: #dc9550;
}
.stat-value {
  font-size: 44px;
}
.mid {
  font-size: 42px;
}
.low {
  font-size: 40px;
}
.red {
  color: #db4a3e;
}
.green {
  color: #4ea33a;
}
.white {
  color: #e2e2e2;
}
.corner {
  position: absolute;
  right: 0;
  bottom: 0;
}

.h-share {
  display: flex;
  align-items: center;
  height: 92px;
  padding: 0 35px 4px 66px;
  border-bottom: 2px solid #222;
  font-size: 44px;
  line-height: 60px;
  white-space: nowrap;
}
.h-share b {
  margin-left: 37px;
  color: #c93f34;
}
.h-share .premium {
  margin-left: auto;
  font-size: 46px;
}
.h-share svg {
  margin-left: 42px;
}

.notice {
  display: flex;
  align-items: center;
  height: 92px;
  padding: 0 40px 0 36px;
  border-bottom: 2px solid #262626;
  font-size: 46px;
  line-height: 64px;
  white-space: nowrap;
}
.notice p {
  flex: 1;
  padding: 0 0 4px 48px;
}

.periods {
  display: grid;
  grid-template-columns: repeat(6, 185fr) 130fr;
  height: 127px;
  border-bottom: 2px solid #222;
  font-size: 48px;
  line-height: 64px;
}
.periods button {
  position: relative;
  display: flex;
  align-items: center;
  justify-content: center;
  padding-bottom: 6px;
}
.periods .settings {
  padding-bottom: 0;
}
.periods .on {
  color: #d8d8d8;
  font-weight: 500;
}
.periods .on::after {
  content: '';
  position: absolute;
  left: 50%;
  bottom: 10px;
  width: 48px;
  height: 11px;
  margin-left: -24px;
  border-radius: 5px;
  background: #d5473c;
}
.more {
  gap: 10px;
}
.more svg {
  margin-top: 6px;
}

.charts {
  padding-top: 5px;
}
.pane-head {
  position: relative;
  display: flex;
  align-items: center;
  gap: 15px;
  height: 59px;
  padding-left: 14px;
  font-size: 32px;
  line-height: 48px;
  overflow: hidden;
}
.picker {
  display: flex;
  align-items: center;
  height: 49px;
  padding: 0 9px 0 7px;
  border-radius: 6px;
  background: #262626;
  color: #dcdcdc;
}
.picker.volume {
  min-width: 175px;
}
.picker svg {
  margin-top: 4px;
}
.readings {
  display: flex;
  gap: 11px;
  white-space: nowrap;
}
.readings span {
  display: flex;
  align-items: center;
}
.round {
  position: absolute;
  right: 22px;
  top: 1px;
  display: flex;
  align-items: center;
  justify-content: center;
  width: 57px;
  height: 57px;
  border-radius: 50%;
  background: #2a2a2a;
}
.plot {
  width: 100%;
  height: auto;
}
.frame {
  fill: none;
  stroke: #2a2a2a;
  stroke-width: 2;
}
.grid {
  stroke: #2a2a2a;
  stroke-width: 1;
}
.scale {
  font-size: 26px;
  fill: #9b9b9b;
}
.t32 {
  font-size: 32px;
}
.sell {
  fill: #7cf062;
}
.buy {
  fill: #ffff6b;
}
.range {
  display: flex;
  gap: 34px;
  height: 46px;
  padding: 0 15px;
  font-size: 26px;
  line-height: 40px;
}
.range .end {
  margin-left: auto;
}

.templates {
  display: flex;
  align-items: center;
  height: 91px;
  border-top: 2px solid #262626;
  border-bottom: 2px solid #262626;
  font-size: 40px;
  line-height: 56px;
  color: #dcdcdc;
}
.slot {
  display: flex;
  align-items: center;
  gap: 12px;
  flex: none;
  width: 224px;
  height: 46px;
  padding-left: 52px;
  border-right: 1px solid #2c2c2c;
}
.slot svg {
  margin-top: 4px;
}
.strip {
  display: flex;
  flex: 1;
  justify-content: flex-end;
  gap: 52px;
  margin-left: 25px;
  padding-right: 27px;
  overflow: hidden;
}
.strip .on {
  color: #cb463b;
}

.info-tabs {
  display: flex;
  height: 116px;
  border-top: 16px solid #060606;
  border-bottom: 3px solid #1e1e1e;
  font-size: 46px;
  line-height: 116px;
  overflow: hidden;
}
.info-tabs a {
  flex: none;
  width: 194px;
  text-align: center;
}
.info-tabs .on {
  color: #cb463b;
}

.dock {
  display: grid;
  grid-template-columns: 329fr repeat(4, 228fr);
  height: 199px;
  font-size: 38px;
  line-height: 48px;
  color: #747a7f;
}
.dock a {
  display: flex;
  flex-direction: column;
  align-items: center;
  gap: 8px;
  padding-top: 15px;
}
.dock .hot {
  color: #cb463b;
}
.dock .index {
  padding-top: 8px;
  font-size: 36px;
}
.index strong {
  margin-top: 6px;
  font-size: 42px;
  font-weight: 400;
  color: #e2493d;
}
.index b {
  color: #e2493d;
}
</style>
